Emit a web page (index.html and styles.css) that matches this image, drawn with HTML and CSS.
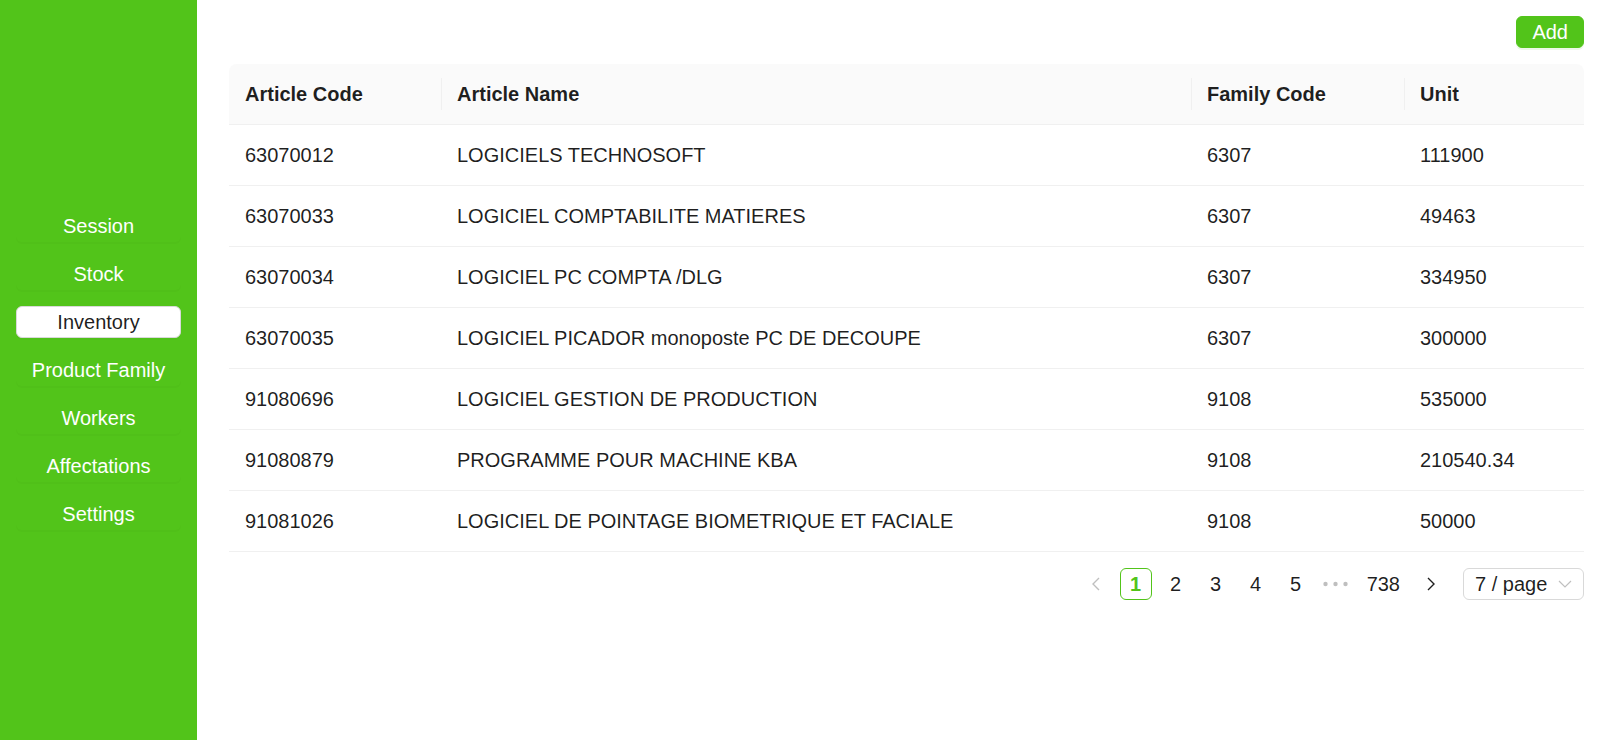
FILE: index.html
```html
<!DOCTYPE html>
<html lang="en">
<head>
<meta charset="utf-8">
<title>Inventory</title>
<link rel="stylesheet" href="styles.css">
</head>
<body>
<div class="layout">
  <aside class="sidebar">
    <nav class="menu">
      <button class="menu-item">Session</button>
      <button class="menu-item">Stock</button>
      <button class="menu-item active">Inventory</button>
      <button class="menu-item">Product Family</button>
      <button class="menu-item">Workers</button>
      <button class="menu-item">Affectations</button>
      <button class="menu-item">Settings</button>
    </nav>
  </aside>
  <main class="content">
    <div class="toolbar">
      <button class="btn-primary">Add</button>
    </div>
    <table class="table">
      <colgroup>
        <col class="c1"><col class="c2"><col class="c3"><col class="c4">
      </colgroup>
      <thead>
        <tr>
          <th>Article Code</th>
          <th class="sep">Article Name</th>
          <th class="sep">Family Code</th>
          <th class="sep">Unit</th>
        </tr>
      </thead>
      <tbody>
        <tr><td>63070012</td><td>LOGICIELS TECHNOSOFT</td><td>6307</td><td>111900</td></tr>
        <tr><td>63070033</td><td>LOGICIEL COMPTABILITE MATIERES</td><td>6307</td><td>49463</td></tr>
        <tr><td>63070034</td><td>LOGICIEL PC COMPTA /DLG</td><td>6307</td><td>334950</td></tr>
        <tr><td>63070035</td><td>LOGICIEL PICADOR monoposte PC DE DECOUPE</td><td>6307</td><td>300000</td></tr>
        <tr><td>91080696</td><td>LOGICIEL GESTION DE PRODUCTION</td><td>9108</td><td>535000</td></tr>
        <tr><td>91080879</td><td>PROGRAMME POUR MACHINE KBA</td><td>9108</td><td>210540.34</td></tr>
        <tr><td>91081026</td><td>LOGICIEL DE POINTAGE BIOMETRIQUE ET FACIALE</td><td>9108</td><td>50000</td></tr>
      </tbody>
    </table>
    <div class="pagination">
      <span class="page-item nav disabled">
        <svg width="10" height="14" viewBox="0 0 10 14"><polyline points="8,1 2,7 8,13" fill="none" stroke="currentColor" stroke-width="1.4"/></svg>
      </span>
      <span class="page-item current">1</span>
      <span class="page-item">2</span>
      <span class="page-item">3</span>
      <span class="page-item">4</span>
      <span class="page-item">5</span>
      <span class="page-item dots">
        <svg width="25" height="6" viewBox="0 0 25 6"><circle cx="2.5" cy="3" r="2.2" fill="currentColor"/><circle cx="12.5" cy="3" r="2.2" fill="currentColor"/><circle cx="22.5" cy="3" r="2.2" fill="currentColor"/></svg>
      </span>
      <span class="page-item">738</span>
      <span class="page-item nav next">
        <svg width="10" height="14" viewBox="0 0 10 14"><polyline points="2,1 8,7 2,13" fill="none" stroke="currentColor" stroke-width="1.4"/></svg>
      </span>
      <div class="size-select">
        <span class="size-text">7 / page</span>
        <svg class="size-arrow" width="14" height="8" viewBox="0 0 14 8"><polyline points="1,1 7,7 13,1" fill="none" stroke="currentColor" stroke-width="1.2"/></svg>
      </div>
    </div>
  </main>
</div>
</body>
</html>
```

FILE: styles.css
```css
* { box-sizing: border-box; }

html, body {
  margin: 0;
  padding: 0;
  height: 100%;
}

body {
  font-family: "Liberation Sans", Arial, Helvetica, sans-serif;
  font-size: 20px;
  color: rgba(0, 0, 0, 0.88);
  background: #ffffff;
}

.layout {
  display: flex;
  height: 740px;
}

.sidebar {
  width: 197px;
  flex: none;
  background: #52c41a;
  display: flex;
  flex-direction: column;
  justify-content: center;
  padding: 0 16px;
}

.menu {
  display: flex;
  flex-direction: column;
  gap: 16px;
}

.menu-item {
  height: 32px;
  padding: 0 8px;
  border: 1px solid transparent;
  border-radius: 6px;
  background: transparent;
  color: #ffffff;
  font-family: inherit;
  font-size: 20px;
  line-height: 30px;
  text-align: center;
  box-shadow: 0 2px 0 rgba(0, 0, 0, 0.02);
  cursor: pointer;
}

.menu-item.active {
  background: #ffffff;
  border-color: #d9d9d9;
  color: rgba(0, 0, 0, 0.88);
}

.content {
  flex: 1;
  min-width: 0;
  padding: 16px 16px 0 32px;
}

.toolbar {
  display: flex;
  justify-content: flex-end;
  margin-bottom: 16px;
}

.btn-primary {
  height: 32px;
  padding: 0 15px;
  border: 1px solid #52c41a;
  border-radius: 6px;
  background: #52c41a;
  color: #ffffff;
  font-family: inherit;
  font-size: 20px;
  line-height: 30px;
  box-shadow: 0 2px 0 rgba(82, 196, 26, 0.1);
  cursor: pointer;
}

.table {
  width: 100%;
  border-collapse: separate;
  border-spacing: 0;
  table-layout: fixed;
}

.c1 { width: 212px; }
.c2 { width: 750px; }
.c3 { width: 213px; }
.c4 { width: 180px; }

.table th,
.table td {
  padding: 16px;
  line-height: 28px;
  text-align: left;
  border-bottom: 1px solid #f0f0f0;
  white-space: nowrap;
}

.table th {
  position: relative;
  background: #fafafa;
  font-weight: 700;
  color: rgba(0, 0, 0, 0.88);
}

.table th:first-child { border-top-left-radius: 8px; }
.table th:last-child { border-top-right-radius: 8px; }

.table th.sep::before {
  content: "";
  position: absolute;
  left: 0;
  top: 50%;
  width: 1px;
  height: 32px;
  transform: translateY(-50%);
  background: #f0f0f0;
}

.pagination {
  display: flex;
  justify-content: flex-end;
  align-items: center;
  margin-top: 16px;
}

.page-item {
  min-width: 32px;
  height: 32px;
  padding: 0 6px;
  margin-right: 8px;
  border: 1px solid transparent;
  border-radius: 6px;
  line-height: 30px;
  text-align: center;
  display: inline-flex;
  align-items: center;
  justify-content: center;
  color: rgba(0, 0, 0, 0.88);
}

.page-item.current {
  border-color: #52c41a;
  color: #52c41a;
  font-weight: 700;
}

.page-item.nav { padding: 0; }
.page-item.disabled { color: rgba(0, 0, 0, 0.25); }
.page-item.next { margin-right: 16px; }
.page-item.dots { color: rgba(0, 0, 0, 0.25); padding: 0; }

.size-select {
  width: 121px;
  height: 32px;
  border: 1px solid #d9d9d9;
  border-radius: 6px;
  display: flex;
  align-items: center;
  justify-content: space-between;
  padding: 0 11px 0 11px;
  line-height: 30px;
}

.size-arrow { color: rgba(0, 0, 0, 0.25); }
```
